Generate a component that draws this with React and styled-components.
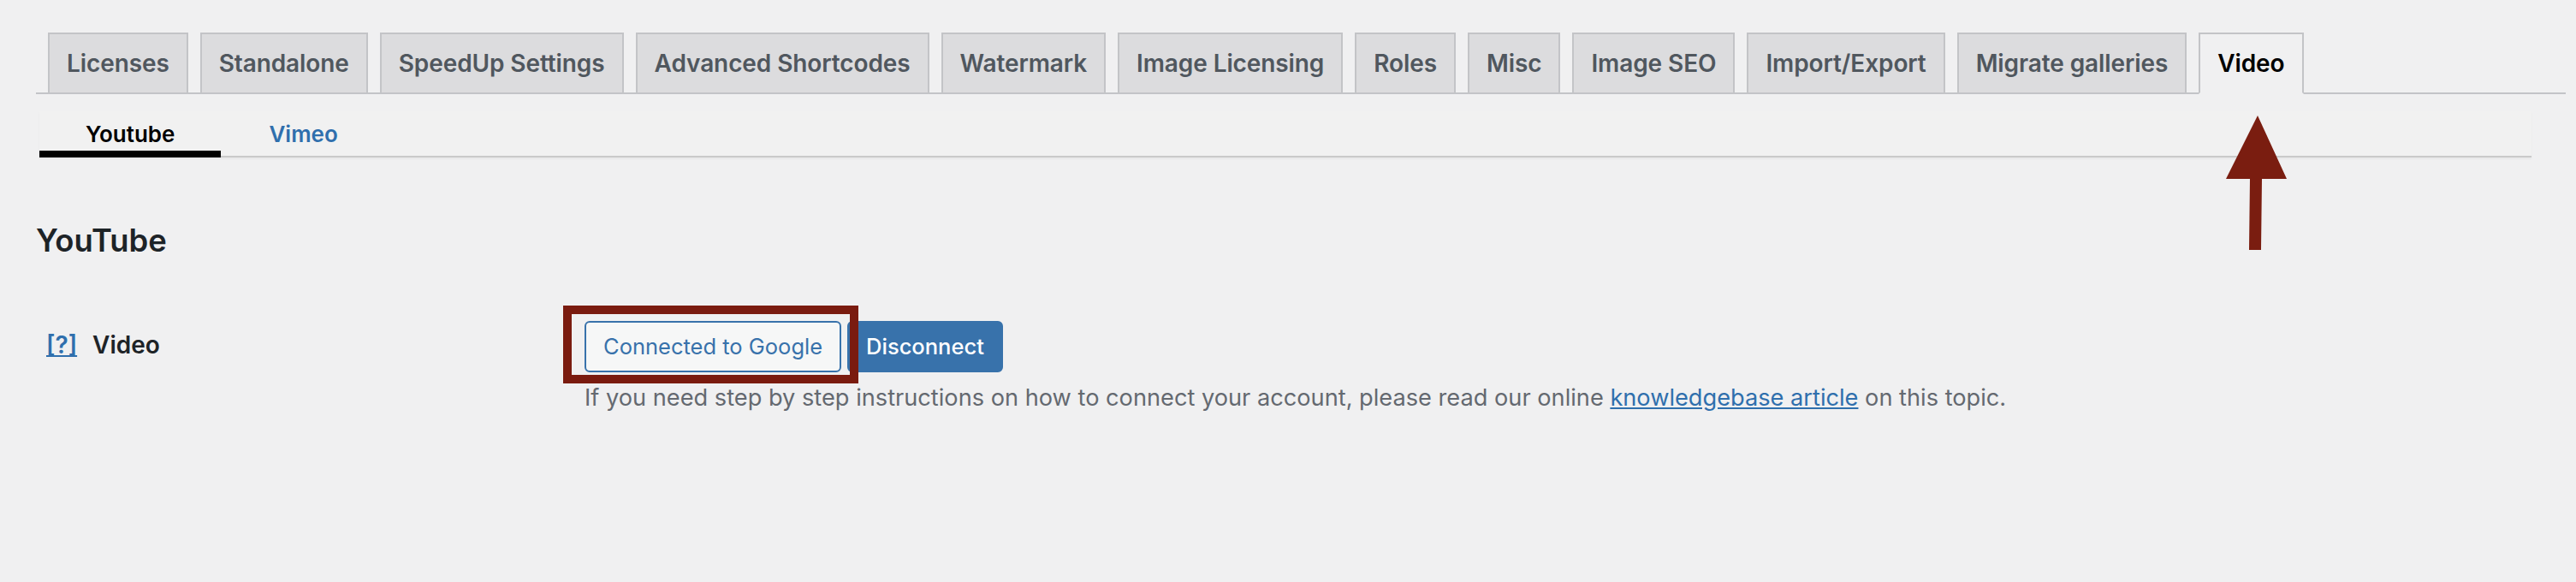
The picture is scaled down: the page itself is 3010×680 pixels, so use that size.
import styled, { createGlobalStyle } from "styled-components";

const GlobalStyle = createGlobalStyle`
  html, body {
    margin: 0;
    padding: 0;
    background: #f0f0f1;
  }
  body {
    font-family: Inter, "Liberation Sans", sans-serif;
    color: #1d2327;
  }
`;

const Page = styled.div`
  position: relative;
  width: 3010px;
  min-height: 680px;
  padding: 38px 12px 0 42px;
  box-sizing: border-box;
`;

const TabBar = styled.nav`
  display: flex;
  align-items: flex-end;
  border-bottom: 2px solid #c3c4c7;
`;

const Tab = styled.a`
  margin-left: 14px;
  margin-bottom: -2px;
  padding: 10px 20px;
  border: 2px solid #c3c4c7;
  border-bottom-color: ${(p) => (p.$active ? "#f0f0f1" : "#c3c4c7")};
  background: ${(p) => (p.$active ? "#f0f0f1" : "#dcdcde")};
  color: ${(p) => (p.$active ? "#000" : "#50575e")};
  font-size: 28px;
  line-height: 48px;
  font-weight: 600;
  letter-spacing: -0.1px;
  text-decoration: none;
  white-space: nowrap;
`;

const SubTabs = styled.div`
  display: flex;
  margin: 20px 40px 0 4px;
  background: #f1f1f1;
  border-bottom: 2px solid #cacaca;
  box-shadow: 0 2px 2px rgba(0, 0, 0, 0.04);
`;

const SubTab = styled.a`
  padding: 10px 54px 2px;
  margin-bottom: -2px;
  margin-right: ${(p) => (p.$active ? "2px" : "0")};
  font-size: 26px;
  line-height: 34px;
  font-weight: 600;
  color: ${(p) => (p.$active ? "#000" : "#2f6fad")};
  border-bottom: 8px solid ${(p) => (p.$active ? "#000" : "transparent")};
  text-decoration: none;
`;

const Heading = styled.h2`
  margin: 74px 0 0;
  font-size: 36.4px;
  line-height: 1.3;
  font-weight: 600;
  color: #1d2327;
`;

const FieldRow = styled.div`
  display: grid;
  grid-template-columns: 641px 1fr;
  margin-top: 70px;
`;

const Label = styled.div`
  padding: 10px 0 0 12px;
  font-size: 28px;
  line-height: 36px;
  font-weight: 600;
  color: #1d2327;
`;

const HelpLink = styled.a`
  margin-right: 18px;
  color: #2f6fad;
  text-decoration: underline;
`;

const Controls = styled.div`
  display: flex;
  flex-direction: column;
  align-items: flex-start;
`;

const ButtonGroup = styled.div`
  display: flex;
  gap: 7px;
`;

const Highlight = styled.span`
  position: relative;
  display: inline-flex;
`;

const HighlightFrame = styled.span`
  position: absolute;
  left: -25px;
  top: -18px;
  right: -20px;
  bottom: -13px;
  border: 10px solid #7a1b0f;
  pointer-events: none;
  z-index: 2;
`;

const Button = styled.button`
  min-height: 60px;
  padding: 0 20px;
  border: 2px solid #3872ab;
  border-radius: 6px;
  background: ${(p) => (p.$primary ? "#3872ab" : "#f6f7f7")};
  color: ${(p) => (p.$primary ? "#fff" : "#3872ab")};
  font-family: Inter, "Liberation Sans", sans-serif;
  font-size: 25.5px;
  line-height: 56px;
  font-weight: ${(p) => (p.$primary ? 500 : 400)};
  cursor: pointer;
`;

const Description = styled.p`
  margin: 10px 0 0;
  font-size: 27.2px;
  line-height: 39px;
  color: #646970;

  a {
    color: #2f6fad;
    text-decoration: underline;
  }
`;

const Arrow = styled.svg`
  position: absolute;
  left: 2598px;
  top: 130px;
`;

const tabs = [
  "Licenses",
  "Standalone",
  "SpeedUp Settings",
  "Advanced Shortcodes",
  "Watermark",
  "Image Licensing",
  "Roles",
  "Misc",
  "Image SEO",
  "Import/Export",
  "Migrate galleries",
  "Video",
];

const App = () => {
  return (
    <Page>
      <GlobalStyle />
      <TabBar>
        {tabs.map((t) => (
          <Tab key={t} $active={t === "Video"}>
            {t}
          </Tab>
        ))}
      </TabBar>

      <SubTabs>
        <SubTab $active>Youtube</SubTab>
        <SubTab>Vimeo</SubTab>
      </SubTabs>

      <Heading>YouTube</Heading>

      <FieldRow>
        <Label>
          <HelpLink>[?]</HelpLink>
          Video
        </Label>
        <Controls>
          <ButtonGroup>
            <Highlight>
              <Button>Connected to Google</Button>
              <HighlightFrame />
            </Highlight>
            <Button $primary>Disconnect</Button>
          </ButtonGroup>
          <Description>
            If you need step by step instructions on how to connect your
            account, please read our online <a>knowledgebase article</a> on
            this topic.
          </Description>
        </Controls>
      </FieldRow>

      <Arrow width="78" height="164" viewBox="0 0 78 164">
        <path
          d="M40 5 L74 79 L45 79 L44 162 L30 162 L31 79 L3 79 Z"
          fill="#7a1d10"
        />
      </Arrow>
    </Page>
  );
};

export default App;
